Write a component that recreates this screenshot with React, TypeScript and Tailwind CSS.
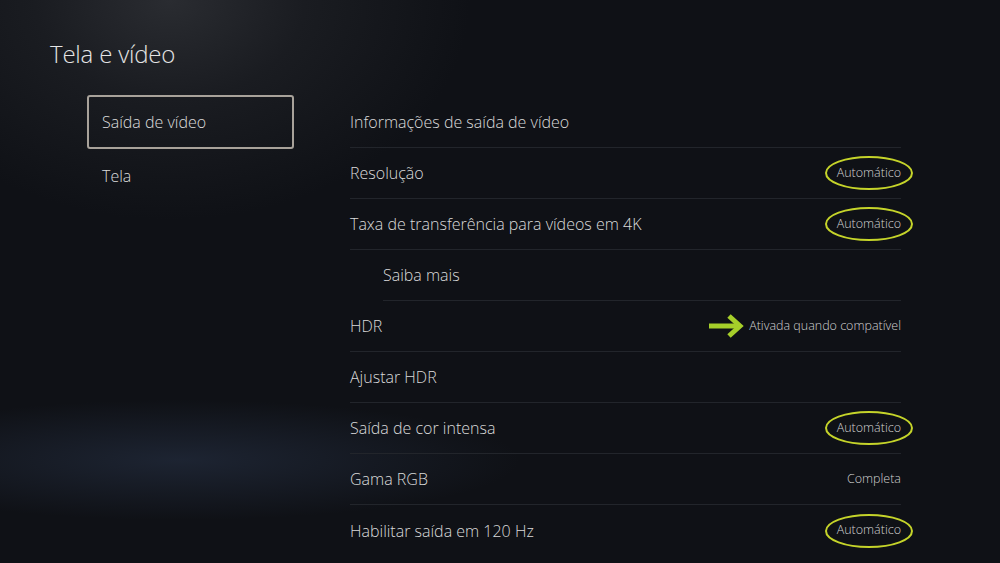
import React from "react";

const Ellipse = () => (
  <svg className="absolute left-1/2 top-1/2 -translate-x-1/2 -translate-y-1/2" width="90" height="36" viewBox="0 0 90 36">
    <ellipse cx="45" cy="18" rx="43" ry="16" fill="none" stroke="#c5d42a" strokeWidth="2" />
  </svg>
);

const Arrow = () => (
  <svg width="36" height="24" viewBox="0 0 36 24" className="mr-[5px]">
    <path d="M1 12 H31" stroke="#a6cf2a" strokeWidth="5" fill="none" />
    <path d="M21 2 L32 12 L21 22" stroke="#a6cf2a" strokeWidth="5" fill="none" strokeLinejoin="miter" />
  </svg>
);

type Row = { label: string; value?: string; circled?: boolean; arrow?: boolean; indent?: boolean; last?: boolean };

const rows: Row[] = [
  { label: "Informações de saída de vídeo" },
  { label: "Resolução", value: "Automático", circled: true },
  { label: "Taxa de transferência para vídeos em 4K", value: "Automático", circled: true },
  { label: "Saiba mais", indent: true },
  { label: "HDR", value: "Ativada quando compatível", arrow: true },
  { label: "Ajustar HDR" },
  { label: "Saída de cor intensa", value: "Automático", circled: true },
  { label: "Gama RGB", value: "Completa" },
  { label: "Habilitar saída em 120 Hz", value: "Automático", circled: true, last: true },
];

export default function App() {
  return (
    <div
      className="relative w-[1000px] h-[563px] overflow-hidden bg-[#0f1116] text-[#dcdcdc]"
      style={{ fontFamily: '"Open Sans", "Noto Sans", sans-serif' }}
    >
      <div className="absolute inset-0 bg-[radial-gradient(ellipse_300px_220px_at_170px_0px,#2a2c31_0%,#1a1c21_45%,transparent_100%)]" />
      <div className="absolute inset-0 bg-[radial-gradient(ellipse_340px_60px_at_180px_460px,#1d2432_0%,transparent_100%)]" />
      <div className="relative">
        <h1 className="pl-[50px] pt-[38px] text-[24px] font-light leading-[32px] text-[#e4e4e4] tracking-[-0.2px]">Tela e vídeo</h1>
        <div className="flex mt-[25px]">
          <div className="ml-[87px] w-[207px] flex flex-col">
            <div className="h-[54px] border-2 border-[#a8a29a] rounded-[3px] flex items-center pl-[13px] text-[16px] font-light">
              Saída de vídeo
            </div>
            <div className="h-[54px] flex items-center pl-[15px] text-[16px] font-light">Tela</div>
          </div>
          <div className="ml-[56px] w-[551px] flex flex-col mt-[2px]">
            {rows.map((r, i) => (
              <div key={i} className={`${r.indent ? "ml-[33px]" : ""} h-[51px] flex items-center justify-between ${r.last ? "" : "border-b border-[#22252b]"}`}>
                <span className="text-[16px] font-light text-[#dadada]">{r.label}</span>
                {r.value && (
                  <span className="flex items-center text-[12.5px] text-[#d0d0d0] font-light">
                    {r.arrow && <Arrow />}
                    <span className="relative">
                      {r.circled && <Ellipse />}
                      <span className="relative">{r.value}</span>
                    </span>
                  </span>
                )}
              </div>
            ))}
          </div>
        </div>
      </div>
    </div>
  );
}
